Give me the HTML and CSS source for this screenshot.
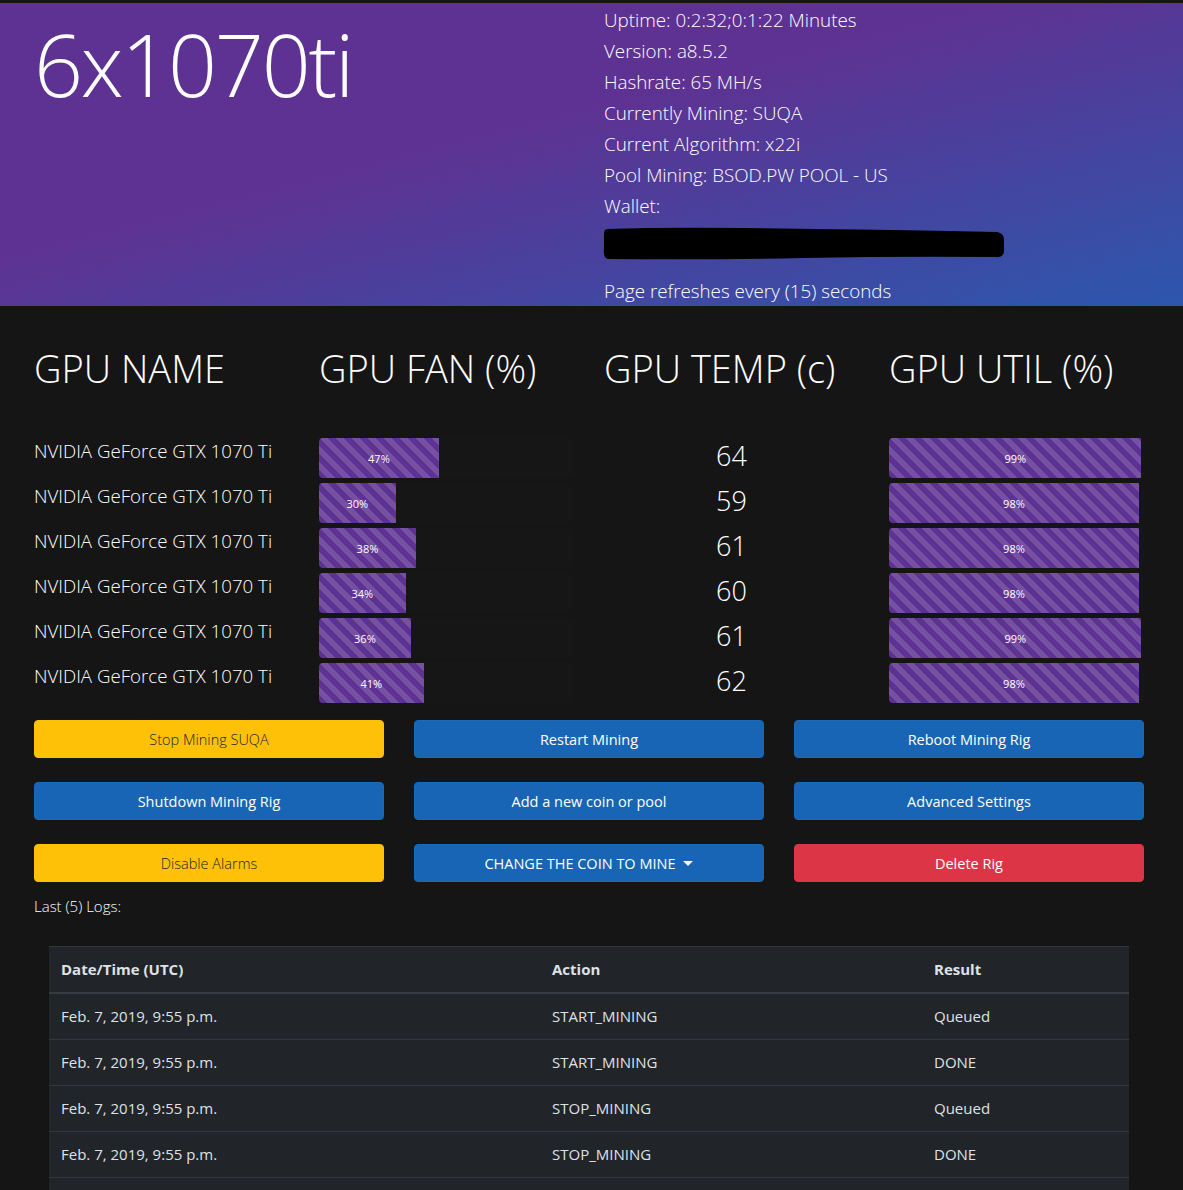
FILE: index.html
```html
<!DOCTYPE html>
<html lang="en">
<head>
<meta charset="utf-8">
<title>6x1070ti</title>
<link rel="stylesheet" href="styles.css">
</head>
<body>
<header class="hero">
  <div class="container row">
    <div class="col half">
      <h1 class="title">6x1070ti</h1>
    </div>
    <div class="col half info">
      <p>Uptime: 0:2:32;0:1:22 Minutes</p>
      <p>Version: a8.5.2</p>
      <p>Hashrate: 65 MH/s</p>
      <p>Currently Mining: SUQA</p>
      <p>Current Algorithm: x22i</p>
      <p>Pool Mining: BSOD.PW POOL - US</p>
      <p>Wallet:</p>
      <svg class="redact" width="402" height="34" viewBox="0 0 402 34" aria-hidden="true"><path d="M4 2 Q60 0 140 1 Q260 2 394 5 Q401 6 401 13 L401 25 Q400 31 392 30 Q300 29 200 31 Q100 33 5 32 Q0 31 1 22 L1 8 Q1 2 4 2 Z" fill="#000"/></svg>
      <p class="refresh">Page refreshes every (15) seconds</p>
    </div>
  </div>
</header>

<main class="container">
  <div class="row gpu-head">
    <div class="col quarter"><h2>GPU NAME</h2></div>
    <div class="col quarter"><h2>GPU FAN (%)</h2></div>
    <div class="col quarter"><h2>GPU TEMP (c)</h2></div>
    <div class="col quarter"><h2>GPU UTIL (%)</h2></div>
  </div>

  <div class="row gpu-row">
    <div class="col quarter gpu-name">NVIDIA GeForce GTX 1070 Ti</div>
    <div class="col quarter"><div class="progress"><div class="bar" style="width:47%">47%</div></div></div>
    <div class="col quarter temp">64</div>
    <div class="col quarter"><div class="progress"><div class="bar" style="width:99%">99%</div></div></div>
  </div>
  <div class="row gpu-row">
    <div class="col quarter gpu-name">NVIDIA GeForce GTX 1070 Ti</div>
    <div class="col quarter"><div class="progress"><div class="bar" style="width:30%">30%</div></div></div>
    <div class="col quarter temp">59</div>
    <div class="col quarter"><div class="progress"><div class="bar" style="width:98%">98%</div></div></div>
  </div>
  <div class="row gpu-row">
    <div class="col quarter gpu-name">NVIDIA GeForce GTX 1070 Ti</div>
    <div class="col quarter"><div class="progress"><div class="bar" style="width:38%">38%</div></div></div>
    <div class="col quarter temp">61</div>
    <div class="col quarter"><div class="progress"><div class="bar" style="width:98%">98%</div></div></div>
  </div>
  <div class="row gpu-row">
    <div class="col quarter gpu-name">NVIDIA GeForce GTX 1070 Ti</div>
    <div class="col quarter"><div class="progress"><div class="bar" style="width:34%">34%</div></div></div>
    <div class="col quarter temp">60</div>
    <div class="col quarter"><div class="progress"><div class="bar" style="width:98%">98%</div></div></div>
  </div>
  <div class="row gpu-row">
    <div class="col quarter gpu-name">NVIDIA GeForce GTX 1070 Ti</div>
    <div class="col quarter"><div class="progress"><div class="bar" style="width:36%">36%</div></div></div>
    <div class="col quarter temp">61</div>
    <div class="col quarter"><div class="progress"><div class="bar" style="width:99%">99%</div></div></div>
  </div>
  <div class="row gpu-row">
    <div class="col quarter gpu-name">NVIDIA GeForce GTX 1070 Ti</div>
    <div class="col quarter"><div class="progress"><div class="bar" style="width:41%">41%</div></div></div>
    <div class="col quarter temp">62</div>
    <div class="col quarter"><div class="progress"><div class="bar" style="width:98%">98%</div></div></div>
  </div>

  <div class="row actions">
    <div class="col third"><button class="btn btn-warning">Stop Mining SUQA</button></div>
    <div class="col third"><button class="btn btn-primary">Restart Mining</button></div>
    <div class="col third"><button class="btn btn-primary">Reboot Mining Rig</button></div>
    <div class="col third"><button class="btn btn-primary">Shutdown Mining Rig</button></div>
    <div class="col third"><button class="btn btn-primary">Add a new coin or pool</button></div>
    <div class="col third"><button class="btn btn-primary">Advanced Settings</button></div>
    <div class="col third"><button class="btn btn-warning">Disable Alarms</button></div>
    <div class="col third"><button class="btn btn-primary dropdown-toggle">CHANGE THE COIN TO MINE</button></div>
    <div class="col third"><button class="btn btn-danger">Delete Rig</button></div>
  </div>

  <div class="col">
    <p class="logs-label">Last (5) Logs:</p>
  </div>

  <div class="table-wrap">
    <table class="logs">
      <thead>
        <tr><th class="c-date">Date/Time (UTC)</th><th class="c-action">Action</th><th class="c-result">Result</th></tr>
      </thead>
      <tbody>
        <tr><td>Feb. 7, 2019, 9:55 p.m.</td><td>START_MINING</td><td>Queued</td></tr>
        <tr><td>Feb. 7, 2019, 9:55 p.m.</td><td>START_MINING</td><td>DONE</td></tr>
        <tr><td>Feb. 7, 2019, 9:55 p.m.</td><td>STOP_MINING</td><td>Queued</td></tr>
        <tr><td>Feb. 7, 2019, 9:55 p.m.</td><td>STOP_MINING</td><td>DONE</td></tr>
        <tr><td>Feb. 7, 2019, 9:54 p.m.</td><td>START_MINING</td><td>DONE</td></tr>
      </tbody>
    </table>
  </div>
</main>
</body>
</html>
```

FILE: styles.css
```css
html, body {
  margin: 0;
  padding: 0;
}
body {
  background: #151515;
  color: #fff;
  font-family: "Open Sans", "Noto Sans", "DejaVu Sans", sans-serif;
  font-size: 16px;
  line-height: 1.5;
  padding-top: 3px;
}
* { box-sizing: border-box; }

.container {
  width: 1140px;
  margin-left: 19px;
}
.row {
  display: flex;
  flex-wrap: wrap;
}
.col {
  padding: 0 15px;
}
.half { width: 50%; }
.quarter { width: 25%; }
.third { width: 33.3333%; }

/* ---------- hero ---------- */
.hero {
  height: 303px;
  background: linear-gradient(to bottom right, #5e3292 42%, #2c57ad 100%);
  overflow: hidden;
}
.title {
  margin: 0;
  padding-top: 9px;
  font-size: 86px;
  font-weight: 300;
  line-height: 1.2;
  letter-spacing: -2.3px;
}
.info {
  padding-top: 2px;
}
.info p {
  margin: 0;
  font-size: 18.8px;
  font-weight: 300;
  line-height: 31px;
}
.redact {
  display: block;
  margin: 5px 0 15px -1px;
}

/* ---------- gpu table ---------- */
.gpu-head {
  margin-top: 38px;
  margin-bottom: 46px;
}
.gpu-head h2 {
  margin: 0;
  font-size: 38px;
  font-weight: 300;
  line-height: 48px;
  white-space: nowrap;
}
.gpu-row {
  height: 45px;
}
.gpu-name {
  font-size: 18.7px;
  font-weight: 300;
  line-height: 26px;
  white-space: nowrap;
}
.temp {
  text-align: center;
  font-size: 27px;
  font-weight: 300;
  line-height: 36px;
}
.progress {
  display: flex;
  height: 40px;
  background: #161616;
  border-radius: 4px;
  overflow: hidden;
}
.bar {
  display: flex;
  align-items: center;
  justify-content: center;
  background-color: #5e3292;
  background-image: linear-gradient(45deg, rgba(255,255,255,.15) 25%, transparent 25%, transparent 50%, rgba(255,255,255,.15) 50%, rgba(255,255,255,.15) 75%, transparent 75%, transparent);
  background-size: 16px 16px;
  color: #fff;
  font-size: 11px;
  line-height: 1;
  white-space: nowrap;
}

/* ---------- buttons ---------- */
.actions {
  margin-top: 12px;
  row-gap: 24px;
}
.btn {
  display: block;
  width: 100%;
  height: 38px;
  padding: 0 12px;
  border: 1px solid transparent;
  border-radius: 4px;
  font-family: inherit;
  font-size: 14.5px;
  font-weight: 400;
  line-height: 37px;
  text-align: center;
  cursor: pointer;
}
.btn-warning {
  background: #ffc107;
  border-color: #ffc107;
  color: #212529;
  font-weight: 300;
}
.btn-primary {
  background: #1765b4;
  border-color: #1a6ab9;
  color: #fff;
}
.btn-danger {
  background: #dc3545;
  border-color: #dc3545;
  color: #fff;
}
.dropdown-toggle::after {
  content: "";
  display: inline-block;
  margin-left: 8px;
  vertical-align: 3px;
  border-top: 5px solid #fff;
  border-left: 5px solid transparent;
  border-right: 5px solid transparent;
}

/* ---------- logs ---------- */
.logs-label {
  margin: 13px 0 29px;
  font-size: 15px;
  font-weight: 300;
  line-height: 22px;
}
.table-wrap {
  padding: 0 30px;
}
.logs {
  width: 100%;
  border-collapse: collapse;
  background: #212428;
  color: #dee2e6;
  font-size: 15px;
}
.logs th, .logs td {
  padding: 12px;
  line-height: 21px;
  text-align: left;
  border-top: 1px solid #32383e;
}
.logs th {
  font-weight: 700;
  border-bottom: 2px solid #373c42;
}
.c-date { width: 491px; }
.c-action { width: 382px; }
```
